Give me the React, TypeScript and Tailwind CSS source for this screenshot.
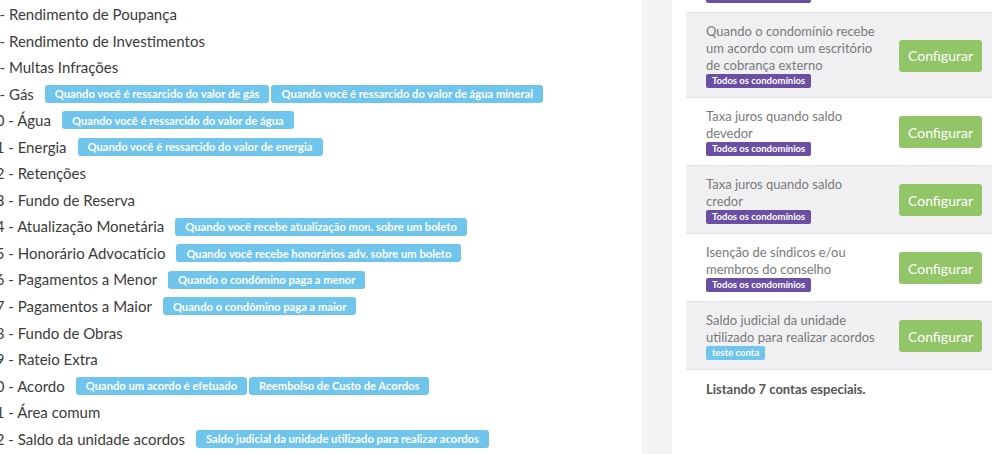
import React from "react";

type Conta = { num: number; nome: string; tags: string[] };

const contas: Conta[] = [
  { num: 6, nome: "Rendimento de Poupança", tags: [] },
  { num: 7, nome: "Rendimento de Investimentos", tags: [] },
  { num: 8, nome: "Multas Infrações", tags: [] },
  {
    num: 9,
    nome: "Gás",
    tags: ["Quando você é ressarcido do valor de gás", "Quando você é ressarcido do valor de água mineral"],
  },
  { num: 10, nome: "Água", tags: ["Quando você é ressarcido do valor de água"] },
  { num: 11, nome: "Energia", tags: ["Quando você é ressarcido do valor de energia"] },
  { num: 12, nome: "Retenções", tags: [] },
  { num: 13, nome: "Fundo de Reserva", tags: [] },
  { num: 14, nome: "Atualização Monetária", tags: ["Quando você recebe atualização mon. sobre um boleto"] },
  { num: 15, nome: "Honorário Advocatício", tags: ["Quando você recebe honorários adv. sobre um boleto"] },
  { num: 16, nome: "Pagamentos a Menor", tags: ["Quando o condômino paga a menor"] },
  { num: 17, nome: "Pagamentos a Maior", tags: ["Quando o condômino paga a maior"] },
  { num: 18, nome: "Fundo de Obras", tags: [] },
  { num: 19, nome: "Rateio Extra", tags: [] },
  { num: 20, nome: "Acordo", tags: ["Quando um acordo é efetuado", "Reembolso de Custo de Acordos"] },
  { num: 21, nome: "Área comum", tags: [] },
  { num: 22, nome: "Saldo da unidade acordos", tags: ["Saldo judicial da unidade utilizado para realizar acordos"] },
];

type Especial = { desc: string; tag: string; tagColor: "purple" | "blue" };

const especiais: Especial[] = [
  { desc: "Quando o condomínio paga um acordo", tag: "Todos os condomínios", tagColor: "purple" },
  {
    desc: "Quando o condomínio recebe um acordo com um escritório de cobrança externo",
    tag: "Todos os condomínios",
    tagColor: "purple",
  },
  { desc: "Taxa juros quando saldo devedor", tag: "Todos os condomínios", tagColor: "purple" },
  { desc: "Taxa juros quando saldo credor", tag: "Todos os condomínios", tagColor: "purple" },
  { desc: "Isenção de síndicos e/ou membros do conselho", tag: "Todos os condomínios", tagColor: "purple" },
  { desc: "Saldo judicial da unidade utilizado para realizar acordos", tag: "teste conta", tagColor: "blue" },
];

function Label({ children }: { children: React.ReactNode }) {
  return (
    <span className="inline-flex h-[18px] items-center rounded-[3px] bg-[#6fc5eb] px-[10px] text-[11.2px] font-bold leading-none text-white">
      {children}
    </span>
  );
}

export default function App() {
  return (
    <div className="flex h-[454px] w-[1000px] overflow-hidden bg-white font-['Lato','Noto_Sans',sans-serif]">
      {/* lista de contas */}
      <div className="w-[642px] shrink-0 overflow-hidden pt-px">
        <ul className="-ml-[13px]">
          {contas.map((c) => (
            <li key={c.num} className="flex h-[26.55px] items-center whitespace-nowrap text-[15px] text-[#3b3b3b]">
              <span>
                {c.num} - {c.nome}
              </span>
              {c.tags.length > 0 && (
                <span className="ml-[11px] flex gap-[2px]">
                  {c.tags.map((t) => (
                    <Label key={t}>{t}</Label>
                  ))}
                </span>
              )}
            </li>
          ))}
        </ul>
      </div>

      <div className="w-[30px] shrink-0 bg-[#f3f3f6]" />

      {/* contas especiais */}
      <div className="flex-1 overflow-hidden pl-[14px] pr-2">
        <div className="-mt-[56px]">
          {especiais.map((e, i) => (
            <div
              key={i}
              className={`flex items-center border-t border-[#e3e3e7] pt-[10px] pb-[9px] pl-5 pr-[10px] ${
                i % 2 === 1 ? "bg-[#f0f0f2]" : "bg-white"
              }`}
            >
              <div className="w-[176px]">
                <p className="text-[13px] leading-[17px] text-[#7a7a7a]">{e.desc}</p>
                <span
                  className={`flex h-[14px] w-fit items-center rounded-[2px] px-[6px] text-[9.5px] font-bold leading-none text-white ${
                    e.tagColor === "purple" ? "bg-[#6b4fa3]" : "bg-[#6fc5eb]"
                  }`}
                >
                  {e.tag}
                </span>
              </div>
              <button className="ml-auto h-[32px] w-[83px] rounded-[3px] bg-[#92c468] text-[14px] text-white">
                Configurar
              </button>
            </div>
          ))}
          <div className="border-t border-[#e3e3e7] pl-5 pt-[10px] text-[13px] font-bold text-[#555]">
            Listando 7 contas especiais.
          </div>
        </div>
      </div>
    </div>
  );
}
